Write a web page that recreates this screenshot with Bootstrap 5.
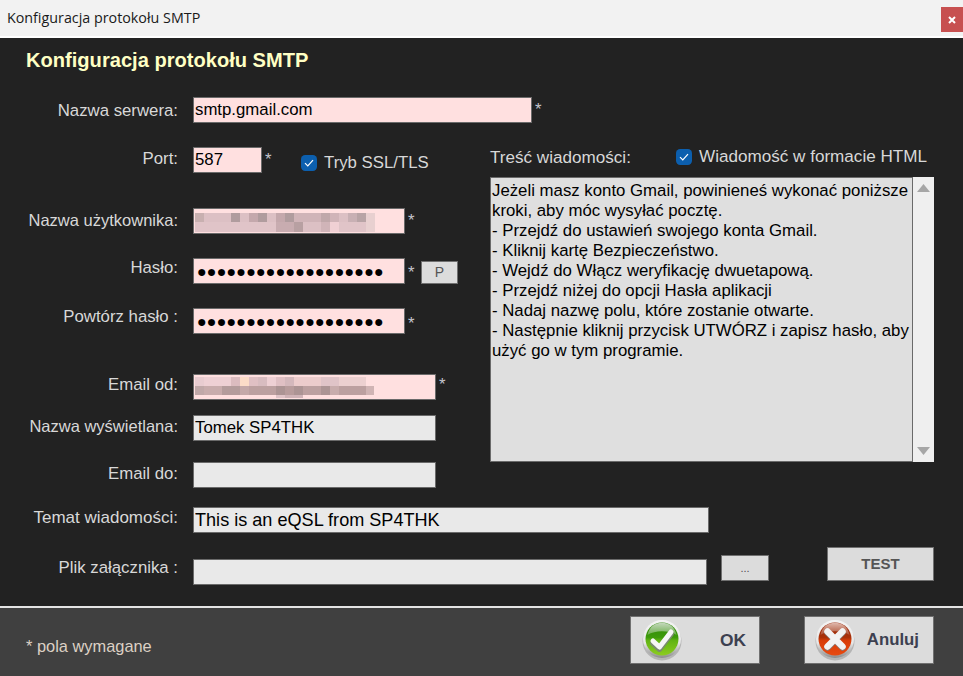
<!DOCTYPE html>
<html lang="pl">
<head>
<meta charset="utf-8">
<title>Konfiguracja protokołu SMTP</title>
<link rel="stylesheet" href="https://cdn.jsdelivr.net/npm/bootstrap@5.3.0/dist/css/bootstrap.min.css">
<style>
html,body{height:100%;margin:0;overflow:hidden}
body{font-family:"Liberation Sans",Arial,sans-serif;font-size:16.8px;background:#222;color:#d8d8d8}
.dlg{width:963px;height:676px}
.titlebar{height:38px;background:#f2f2f2;border-bottom:2px solid #fff;padding-left:7px;color:#1a1a1a;font-family:"Open Sans",sans-serif;font-size:14.3px;line-height:36px}
.closer{width:22px;height:25px;background:#c75050;margin-top:7px;border:0;padding:0;border-radius:0;line-height:0}
.panel{background:#222;padding-top:10px}
.head{font-size:20.1px;font-weight:700;line-height:24px;color:#ffffc4;margin:0 0 25px 26px}
.lbl{width:178px;text-align:right;line-height:20px;flex:none;margin-right:15px;margin-bottom:0;white-space:nowrap;color:#d8d8d8}
.tight{font-size:16.5px}.wide{font-size:17px}
.up4{margin-top:4px}.up2{margin-top:2px}.up1{margin-top:1px}.dn0{margin-top:0}.dn1{margin-top:-1px}
input.fld{height:26px;border:1px solid #6a6a6a;border-radius:0;padding:0 1px;font-family:inherit;font-size:16.8px;line-height:22px;color:#000;flex:none;box-shadow:none}
input.pink{background:#ffe0e0}
input.grey{background:#e9e9e9}
input.subj{font-size:18.1px}
.w339{width:339px}.w69{width:69px}.w212{width:212px}.w243{width:243px}.w516{width:516px}.w514{width:514px}
input.dots{font-size:16.3px;padding-left:3px}
.req{color:#c4c4cc;margin-left:3px;line-height:20px;width:10px;flex:none;margin-top:3px}
.reqh{margin-top:5px}.reqp{margin-top:6px}.reqe{margin-top:1px}
.masked{position:relative;flex:none}
.masked svg{position:absolute;left:0;top:0;pointer-events:none}
.gapb{margin-top:24px}.gapc{margin-top:24px}.gapd{margin-top:40px}.gape{margin-top:15px}.gapf{margin-top:21px}.gapg{margin-top:19px}.gaph{margin-top:14px}.gapj{margin-top:35px}
.leftcol{width:490px;flex:none}
.rightcol{width:444px;flex:none}
.ssl{margin-left:26px;margin-top:6px}
.chk{width:16px;height:16px;margin:0;border-radius:3px;flex:none;border:0;background-color:#0c5fae;background-size:10px;background-position:center;background-repeat:no-repeat;box-shadow:none}
.form-check-input.chk:checked{background-color:#0c5fae;background-image:url("data:image/svg+xml,%3csvg xmlns='http://www.w3.org/2000/svg' viewBox='0 0 10 10'%3e%3cpath fill='none' stroke='%23fff' stroke-width='1.2' d='M1 5.2 3.8 8 9 2.2'/%3e%3c/svg%3e")}
.chklabel{line-height:20px;margin-left:7px;color:#d8d8d8;white-space:nowrap}
.chkwide{font-size:17.1px}
.rhead{height:30px}
.rtitle{margin-top:1px;line-height:20px;width:186px;flex:none;font-size:17.1px}
.msgwrap{height:285px}
textarea.msg{width:423px;height:285px;resize:none;overflow:hidden;border:1px solid #6a6a6a;border-radius:0;background:#dfdfdf;color:#000;font-family:inherit;font-size:16.8px;line-height:20px;padding:3px 1px;flex:none;box-shadow:none;white-space:pre}
.sbar{width:21px;background:#efefef;flex:none;padding:7px 0}
.gbtn{border:1px solid #707070;border-radius:0;background:#dcdcdc;padding:0;flex:none;font-family:inherit;color:#505050;box-shadow:none}
.pbtn{width:37px;height:23px;margin-left:3px;margin-top:3px;font-size:14px;line-height:21px;color:#555}
.dotbtn{width:48px;height:26px;margin-left:14px;margin-top:8px;font-size:11px;line-height:24px}
.testbtn{width:107px;height:34px;margin-left:58px;font-size:15px;font-weight:700;line-height:30px;padding-bottom:1px;color:#555}
.lastrow{height:38px}
.file{margin-top:12px}
.plik{margin-top:11px}
.rule{height:2px;background:#e4e4e4;flex:none}
.foot{height:68px;background:#404040;padding:8px 29px 0 26px;flex:none}
.note{margin-top:20px;line-height:20px;color:#dcd0c4;font-size:16.4px}
.bigbtn{width:130px;height:48px;padding:0;font-size:16.8px;font-weight:700;color:#3c4050;background:#dcdcdc}
.okb{padding-left:11px;padding-right:13px;margin-right:44px}
.okb span{font-size:17.4px}
.nob{padding-left:10px;padding-right:14px}
</style>
</head>
<body>
<div class="dlg d-flex flex-column">
  <div class="titlebar d-flex justify-content-between">
    <span>Konfiguracja protokołu SMTP</span>
    <button class="btn closer" type="button" aria-label="Zamknij"><svg width="8" height="8" viewBox="0 0 8 8"><path d="M1 1 7 7M7 1 1 7" stroke="#fff" stroke-width="2"/></svg></button>
  </div>
  <div class="panel flex-grow-1">
    <h1 class="head">Konfiguracja protokołu SMTP</h1>
    <div class="d-flex">
      <label class="lbl up4">Nazwa serwera:</label>
      <input class="form-control fld pink w339" value="smtp.gmail.com">
      <span class="req">*</span>
    </div>
    <div class="d-flex gapb">
      <div class="leftcol">
        <div class="d-flex">
          <label class="lbl up2">Port:</label>
          <input class="form-control fld pink w69" value="587">
          <span class="req">*</span>
          <div class="d-flex align-items-center align-self-start ssl">
            <input class="form-check-input chk" type="checkbox" checked>
            <span class="chklabel">Tryb SSL/TLS</span>
          </div>
        </div>
        <div class="d-flex gapj">
          <label class="lbl up2 tight">Nazwa użytkownika:</label>
          <div class="masked">
            <input class="form-control fld pink w212" value="">
            <svg width="212" height="26" viewBox="0 0 212 26" aria-hidden="true">
              <g transform="translate(2 5)">
                <rect x="0" y="0" width="9" height="9" fill="#c8b0b0"/><rect x="9" y="0" width="27" height="9" fill="#dcc0c4"/><rect x="36" y="0" width="9" height="9" fill="#b09c9e"/><rect x="45" y="0" width="9" height="9" fill="#dcc0c4"/><rect x="54" y="0" width="9" height="9" fill="#c4a8ac"/><rect x="63" y="0" width="9" height="9" fill="#b09c9e"/><rect x="72" y="0" width="9" height="9" fill="#dcc0c4"/><rect x="81" y="0" width="9" height="9" fill="#c4a8ac"/><rect x="90" y="0" width="9" height="9" fill="#b09c9e"/><rect x="99" y="0" width="27" height="9" fill="#d0b4b8"/><rect x="126" y="0" width="9" height="9" fill="#c0a8aa"/><rect x="135" y="0" width="9" height="9" fill="#d0b4b8"/><rect x="144" y="0" width="9" height="9" fill="#dcc0c4"/><rect x="153" y="0" width="9" height="9" fill="#c8b0b4"/><rect x="162" y="0" width="9" height="9" fill="#b8a4a6"/><rect x="171" y="0" width="9" height="9" fill="#e8d0d0"/>
                <rect x="0" y="9" width="81" height="10" fill="#e0c4c8"/><rect x="81" y="9" width="18" height="10" fill="#c8acb0"/><rect x="99" y="9" width="9" height="10" fill="#b8a0a2"/><rect x="108" y="9" width="18" height="10" fill="#dcc0c4"/><rect x="126" y="9" width="9" height="10" fill="#d0b4b8"/><rect x="135" y="9" width="9" height="10" fill="#f0d0d4"/><rect x="144" y="9" width="27" height="10" fill="#e0c4c8"/><rect x="171" y="9" width="9" height="10" fill="#e8d0d0"/>
              </g>
            </svg>
          </div>
          <span class="req">*</span>
        </div>
        <div class="d-flex gapc">
          <label class="lbl dn0">Hasło:</label>
          <input class="form-control fld pink w212 dots" value="●●●●●●●●●●●●●●●●●●●">
          <span class="req reqh">*</span>
          <button class="btn gbtn pbtn" type="button">P</button>
        </div>
        <div class="d-flex gapc">
          <label class="lbl dn1">Powtórz hasło :</label>
          <input class="form-control fld pink w212 dots" value="●●●●●●●●●●●●●●●●●●●">
          <span class="req reqp">*</span>
        </div>
        <div class="d-flex gapd">
          <label class="lbl up1">Email od:</label>
          <div class="masked">
            <input class="form-control fld pink w243" value="">
            <svg width="243" height="26" viewBox="0 0 243 26" aria-hidden="true">
              <g transform="translate(2 3)">
                <rect x="0" y="0" width="9" height="9" fill="#e8ccd0"/><rect x="9" y="0" width="27" height="9" fill="#eed0d4"/><rect x="36" y="0" width="9" height="9" fill="#dcbcc0"/><rect x="45" y="0" width="9" height="9" fill="#fcdcc8"/><rect x="54" y="0" width="9" height="9" fill="#e0c0c4"/><rect x="63" y="0" width="9" height="9" fill="#d8bcc0"/><rect x="72" y="0" width="9" height="9" fill="#eed0d4"/><rect x="81" y="0" width="9" height="9" fill="#e0c0c4"/><rect x="90" y="0" width="9" height="9" fill="#d4b8bc"/><rect x="99" y="0" width="27" height="9" fill="#eccccc"/><rect x="126" y="0" width="18" height="9" fill="#e0c4c8"/><rect x="144" y="0" width="27" height="9" fill="#ecd0d0"/>
                <rect x="0" y="9" width="9" height="9" fill="#c0a8a8"/><rect x="9" y="9" width="18" height="9" fill="#c8acac"/><rect x="27" y="9" width="18" height="9" fill="#b49c9c"/><rect x="45" y="9" width="9" height="9" fill="#c4a8a8"/><rect x="54" y="9" width="27" height="9" fill="#bca0a0"/><rect x="81" y="9" width="9" height="9" fill="#ac9494"/><rect x="90" y="9" width="9" height="9" fill="#b89c9c"/><rect x="99" y="9" width="9" height="9" fill="#ac9494"/><rect x="108" y="9" width="18" height="9" fill="#bca0a0"/><rect x="126" y="9" width="9" height="9" fill="#ac9494"/><rect x="135" y="9" width="9" height="9" fill="#c8acac"/><rect x="144" y="9" width="27" height="9" fill="#bca0a0"/><rect x="171" y="9" width="8" height="9" fill="#d0b4b4"/>
                <rect x="81" y="18" width="9" height="3" fill="#e0c4c8"/><rect x="90" y="18" width="18" height="3" fill="#d0b4b8"/>
              </g>
            </svg>
          </div>
          <span class="req reqe">*</span>
        </div>
        <div class="d-flex gape">
          <label class="lbl up1 tight">Nazwa wyświetlana:</label>
          <input class="form-control fld grey w243" value="Tomek SP4THK">
        </div>
        <div class="d-flex gapf">
          <label class="lbl up2">Email do:</label>
          <input class="form-control fld grey w243" value="">
        </div>
      </div>
      <div class="rightcol">
        <div class="d-flex rhead">
          <span class="rtitle">Treść wiadomości:</span>
          <div class="d-flex align-items-center align-self-start">
            <input class="form-check-input chk" type="checkbox" checked>
            <span class="chklabel chkwide">Wiadomość w formacie HTML</span>
          </div>
        </div>
        <div class="d-flex msgwrap">
          <textarea class="form-control msg" wrap="off">Jeżeli masz konto Gmail, powinieneś wykonać poniższe
kroki, aby móc wysyłać pocztę.
- Przejdź do ustawień swojego konta Gmail.
- Kliknij kartę Bezpieczeństwo.
- Wejdź do Włącz weryfikację dwuetapową.
- Przejdź niżej do opcji Hasła aplikacji
- Nadaj nazwę polu, które zostanie otwarte.
- Następnie kliknij przycisk UTWÓRZ i zapisz hasło, aby
użyć go w tym programie.</textarea>
          <div class="sbar d-flex flex-column justify-content-between align-items-center">
            <svg width="13" height="8" viewBox="0 0 13 8"><path d="M6.5 0 13 8H0Z" fill="#a6a6a6"/></svg>
            <svg width="13" height="8" viewBox="0 0 13 8"><path d="M6.5 8 13 0H0Z" fill="#a6a6a6"/></svg>
          </div>
        </div>
      </div>
    </div>
    <div class="d-flex gapg">
      <label class="lbl up1 wide">Temat wiadomości:</label>
      <input class="form-control fld grey w516 subj" value="This is an eQSL from SP4THK">
    </div>
    <div class="d-flex align-items-start gaph lastrow">
      <label class="lbl plik">Plik załącznika :</label>
      <input class="form-control fld grey w514 file" value="">
      <button class="btn gbtn dotbtn" type="button">...</button>
      <button class="btn gbtn testbtn" type="button">TEST</button>
    </div>
  </div>
  <div class="rule"></div>
  <div class="foot d-flex justify-content-between">
    <span class="note">* pola wymagane</span>
    <div class="d-flex">
      <button class="btn gbtn bigbtn okb d-flex align-items-center justify-content-between" type="button">
        <svg width="40" height="42" viewBox="0 0 40 42" aria-hidden="true">
          <defs>
            <linearGradient id="ring" x1="0" y1="0" x2="0" y2="1"><stop offset="0" stop-color="#f4f4f4"/><stop offset=".6" stop-color="#e8e8e8"/><stop offset="1" stop-color="#8c8c8c"/></linearGradient>
            <linearGradient id="gb" x1="0" y1="0" x2="0" y2="1"><stop offset="0" stop-color="#2f8a08"/><stop offset=".45" stop-color="#3d9a0a"/><stop offset=".55" stop-color="#62b414"/><stop offset="1" stop-color="#8ccc20"/></linearGradient>
            <linearGradient id="gh" x1="0" y1="0" x2="0" y2="1"><stop offset="0" stop-color="#c4d8bc"/><stop offset="1" stop-color="#6cae4c"/></linearGradient>
            <linearGradient id="rb" x1="0" y1="0" x2="0" y2="1"><stop offset="0" stop-color="#9a2c10"/><stop offset=".45" stop-color="#a83008"/><stop offset=".55" stop-color="#d83c08"/><stop offset="1" stop-color="#e84a10"/></linearGradient>
            <linearGradient id="rh" x1="0" y1="0" x2="0" y2="1"><stop offset="0" stop-color="#e0b8ac"/><stop offset="1" stop-color="#ac5034"/></linearGradient>
          </defs>
          <circle cx="20" cy="22" r="19.5" fill="#a8a8a8" opacity=".75"/>
          <circle cx="20" cy="20" r="19" fill="url(#ring)"/>
          <circle cx="20" cy="20" r="16.5" fill="url(#gb)"/>
          <path d="M5.5 16C7 8 13 3.8 20 3.8S33 8 34.5 16C27 11 13 11 5.5 16Z" fill="url(#gh)"/>
          <path d="M11 23 17.5 29 29 14" fill="none" stroke="#7a8a70" stroke-width="5.5" stroke-linecap="round" stroke-linejoin="round" transform="translate(0 1.2)"/>
          <path d="M11 22 17.5 28 29 13" fill="none" stroke="#f6f6f6" stroke-width="5" stroke-linecap="round" stroke-linejoin="round"/>
        </svg>
        <span>OK</span>
      </button>
      <button class="btn gbtn bigbtn nob d-flex align-items-center justify-content-between" type="button">
        <svg width="40" height="42" viewBox="0 0 40 42" aria-hidden="true">
          <circle cx="20" cy="22" r="19.5" fill="#a8a8a8" opacity=".75"/>
          <circle cx="20" cy="20" r="19" fill="url(#ring)"/>
          <circle cx="20" cy="20" r="16.5" fill="url(#rb)"/>
          <path d="M5.5 16C7 8 13 3.8 20 3.8S33 8 34.5 16C27 11 13 11 5.5 16Z" fill="url(#rh)"/>
          <path d="M12.5 12.5 27.5 27.5M27.5 12.5 12.5 27.5" fill="none" stroke="#8a7a74" stroke-width="6.5" stroke-linecap="round" transform="translate(0 1)"/>
          <path d="M12.5 12.5 27.5 27.5M27.5 12.5 12.5 27.5" fill="none" stroke="#f2f2f2" stroke-width="6.5" stroke-linecap="round"/>
        </svg>
        <span>Anuluj</span>
      </button>
    </div>
  </div>
</div>
</body>
</html>
